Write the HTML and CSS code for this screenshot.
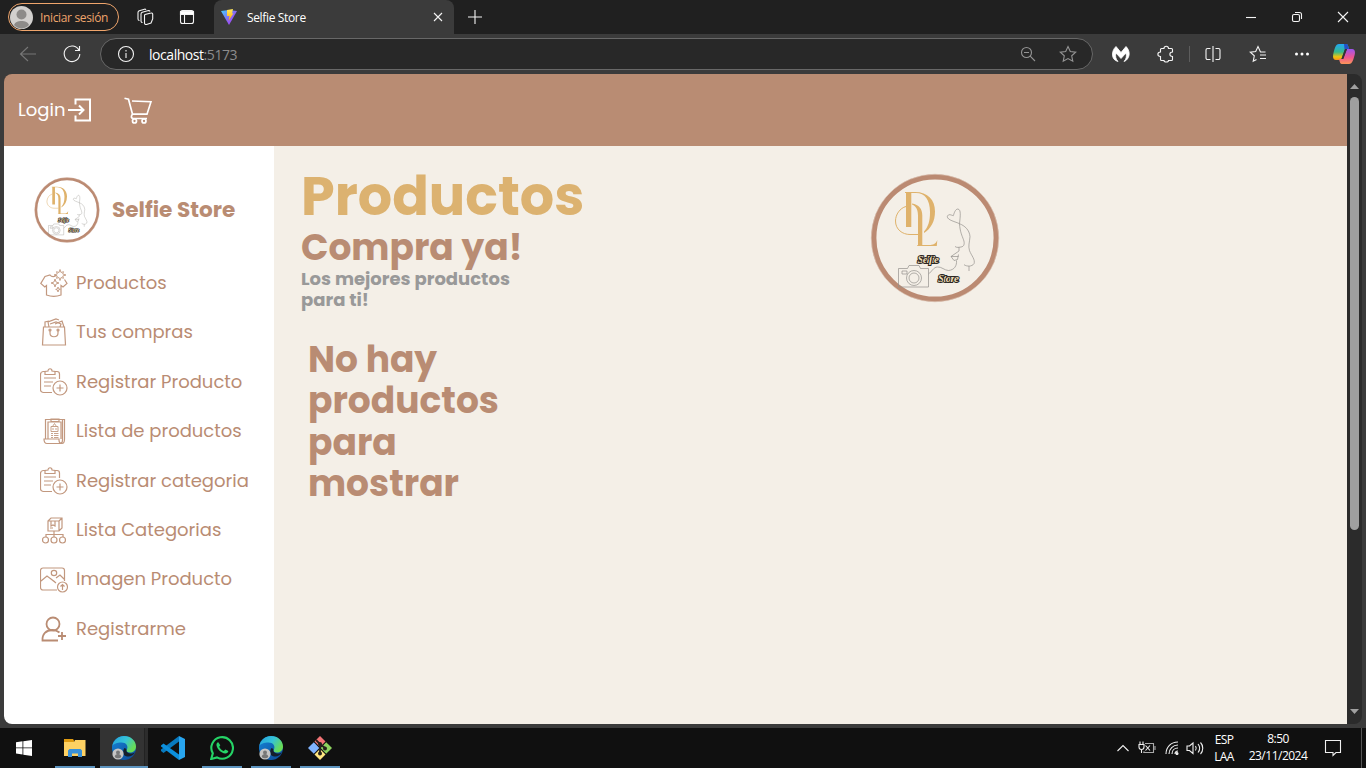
FILE: index.html
```html
<!DOCTYPE html>
<html lang="es">
<head>
<meta charset="utf-8">
<title>Selfie Store</title>
<link rel="stylesheet" href="styles.css">
</head>
<body>
<svg class="defs" aria-hidden="true">
  <defs>
    <linearGradient id="viteA" x1="0" y1="0" x2="1" y2="1"><stop offset="0" stop-color="#41d1ff"/><stop offset=".55" stop-color="#8a63f5"/><stop offset="1" stop-color="#bd34fe"/></linearGradient>
    <linearGradient id="viteB" x1="0" y1="0" x2="0" y2="1"><stop offset="0" stop-color="#ffea5f"/><stop offset="1" stop-color="#ffa800"/></linearGradient>
    <linearGradient id="edgeA" x1="0" y1="0" x2="1" y2=".5"><stop offset="0" stop-color="#249fdc"/><stop offset=".55" stop-color="#35c3d8"/><stop offset="1" stop-color="#68dc55"/></linearGradient>
    <linearGradient id="edgeB" x1="0" y1="0" x2="1" y2="1"><stop offset="0" stop-color="#1685d8"/><stop offset="1" stop-color="#0c4896"/></linearGradient>
    <linearGradient id="copA" x1="0" y1="0" x2="0" y2="1"><stop offset="0" stop-color="#22a7f5"/><stop offset=".5" stop-color="#36b98b"/><stop offset=".8" stop-color="#f1c40f"/><stop offset="1" stop-color="#f39019"/></linearGradient>
    <linearGradient id="copB" x1="0" y1="0" x2="0" y2="1"><stop offset="0" stop-color="#9c55f0"/><stop offset=".55" stop-color="#ee5592"/><stop offset="1" stop-color="#fb9657"/></linearGradient>
  </defs>
  <symbol id="logo" viewBox="0 0 130 130">
    <circle cx="65" cy="65" r="61.2" fill="none" stroke="#bb8a72" stroke-width="5.2"/>
    <circle cx="65" cy="65" r="63.8" fill="none" stroke="#dcc4b6" stroke-width=".6"/>
    <path d="M35 19h10c13 0 20 8 20 19.500 0 10-4 17-11 21.500v-1.500c4-4.500 6-10 6-19.500 0-12-5-19-14-19h-4.700v34H36V20h-1z" fill="#dfb26b"/>
    <path d="M42 30.500c7 1 10.300 5.500 10.300 12V72H59c4 0 7-1 8.300-5l-.5 6H47v-.8h1V43c0-6-1.500-9.500-6-11.500z" fill="#dfb26b"/>
    <path d="M36 33.500c-6 1.500-10.500 8-10.500 14.500 0 8.500 7 13.500 14.500 13.500h8" fill="none" stroke="#dfb26b" stroke-width="1"/>
    <g fill="none" stroke="#94918c" stroke-width=".7" stroke-linejoin="round">
      <path d="M89.500 50.700c-4-2-12-3.500-12.200-7 1-3.500 4-1.500 6-1 1-3 2-6.500 4.500-6.700 3.500.5 2.500 7 1.700 14.700.5 8 2.500 12 4 16 1.500 4 .5 7-2.500 7.300-2 .2-4 1-6-.5M89.500 50.700c5 2 10 6 10.500 13-.5 6-2 9-.5 14 2 5 6 9 4.500 13-2 3-7 3-10 1M99 93v5M89 74v4l-8 5.500h7.500M81 83.500l3 4 3.500-1 1-5M86.500 87.500c.5 5-2 9.500-8 10-4 0-7-4-11-3.500-4 0-6 5-9 7"/>
      <path d="M28.500 95.500h9l1.500-3h10l1.500 3h8v18.500h-30zM32 98h5v3h-5z"/>
      <circle cx="44" cy="105" r="7.500"/><circle cx="44" cy="105" r="5"/>
    </g>
    <g class="logo-word"><text x="47.500" y="89.500" textLength="21.500">Selfie</text><text x="68" y="108.500" textLength="21">Store</text></g>
  </symbol>
  <symbol id="clip" viewBox="0 0 28 28">
    <path d="M12 24.500H3.500a3 3 0 0 1-3-3V6.500a3 3 0 0 1 3-3H6M14 3.500h3a2.500 2.500 0 0 1 2.500 2.500v5M5 6.500V3.500l3-.5c0-3 4-3 4 0l3 .5v3zM4 10h12M4 14h9M4 18h7"/><circle cx="20" cy="20" r="7"/><path d="M20 16.500v7M16.500 20h7"/>
  </symbol>
  <symbol id="edge" viewBox="0 0 24 24">
    <circle cx="12" cy="12" r="12" fill="url(#edgeB)"/>
    <path d="M.3 10C1.500 4 6.500 0 12 0c7 0 12 5 12 10.500 0 4-3 6-6 6-2.500 0-4-1-3.500-2.200C17 10 14 6.500 9.500 6.500 5 6.500 1.500 8 .3 10z" fill="url(#edgeA)"/>
    <path d="M14.500 14c-.5 2 2 3.500 4.500 3.500 1.500 0 3-.4 4-1.200C21 20 18 21 15 20.500c-4-.6-5-5-2.500-8.500 1 .3 2 1 2 2z" fill="#151f2c"/>
    <circle cx="6" cy="18" r="5.600" fill="#c6c5c4"/><circle cx="6" cy="16.400" r="2" fill="#777"/><path d="M2.700 21c0-4 6.600-4 6.600 0-1.500 1.800-5 1.800-6.600 0z" fill="#777"/>
  </symbol>
</svg>

<div class="browser">
  <header class="tabstrip">
    <div class="profile">
      <svg class="avatar" viewBox="0 0 23 23"><circle cx="11.500" cy="11.500" r="11.500" fill="#d2d0ce"/><circle cx="11.500" cy="8.500" r="5" fill="#8d8b89"/><path d="M4 19c1.500-5.500 13.500-5.500 15 0-4 4.500-11 4.500-15 0z" fill="#8d8b89"/></svg>
      <span class="profile-name">Iniciar sesión</span>
    </div>
    <svg class="ico workspaces" viewBox="0 0 20 20"><path d="M10 7.500l6-1.500a1.300 1.300 0 0 1 1.700 1.300V12l-1.700 4-4.500 1.400a1.500 1.500 0 0 1-2-1.400V9a1.700 1.700 0 0 1 .5-1.500zM7.500 15.500a1.500 1.500 0 0 1-1.500-1.500V7a2 2 0 0 1 1.300-1.800l6.200-1.700a1.500 1.500 0 0 1 1.500 1M4.500 13.500A1.500 1.500 0 0 1 3 12V5.500a2 2 0 0 1 1.300-1.800l5.200-1.500a1.500 1.500 0 0 1 1.500.6" /></svg>
    <svg class="ico actions" viewBox="0 0 20 20"><rect x="3.500" y="3.500" width="13" height="13" rx="2"/><path d="M3.500 4.500h13v3h-13z" fill="#fff"/><path d="M7.500 8v8"/></svg>
    <div class="tab">
      <svg class="favicon" viewBox="0 0 16 16"><path d="M0 2l7.500-1L16 2 8 16z" fill="url(#viteA)"/><path d="M6 1l6-1-1 4.500 1.500-.3L7.500 12l1-5H6z" fill="url(#viteB)"/></svg>
      <span class="tab-title">Selfie Store</span>
      <svg class="ico tab-close" viewBox="0 0 20 20"><path d="M6 6l8 8M14 6l-8 8"/></svg>
    </div>
    <svg class="ico newtab" viewBox="0 0 20 20"><path d="M3 10h14M10 3v14"/></svg>
    <div class="winctl">
      <svg class="ico" viewBox="0 0 20 20"><path d="M5 10.500h10"/></svg>
      <svg class="ico" viewBox="0 0 20 20"><rect x="5.500" y="7.500" width="7" height="7" rx="1.500"/><path d="M8 5.500h4.500a2 2 0 0 1 2 2V12"/></svg>
      <svg class="ico" viewBox="0 0 20 20"><path d="M5 5l10 10M15 5L5 15"/></svg>
    </div>
  </header>

  <div class="toolbar">
    <svg class="ico back" viewBox="0 0 20 20"><path d="M18 10H2.500M10 3l-7.500 7 7.500 7"/></svg>
    <svg class="ico reload" viewBox="0 0 20 20"><path d="M17 6.300A7.800 7.800 0 1 0 17.800 10M17.500 2v4.500H13"/></svg>
    <div class="address">
      <svg class="ico" viewBox="0 0 20 20"><circle cx="10" cy="10" r="7.500"/><path d="M10 9v5M10 6v1.500"/></svg>
      <span class="url">localhost<span class="port">:5173</span></span>
      <svg class="ico dim zoomout" viewBox="0 0 20 20"><circle cx="8.500" cy="8.500" r="5"/><path d="M12.200 12.200L17 17M6 8.500h5"/></svg>
      <svg class="ico dim star" viewBox="0 0 20 20"><path d="M10 2.500l2.300 5 5.400.6-4 3.700 1.100 5.500-4.800-2.700-4.800 2.700 1.100-5.500-4-3.700 5.400-.6z"/></svg>
    </div>
    <svg class="ico mb" viewBox="0 0 20 20"><path d="M5 2.500L10 8.500l5-6c4 4 4.500 10 0 14l-2 1c2-2 3-5 2-8.500L10 14.500 5 9c-1 3.500 0 6.500 2 8.500C0 16 0 7 5 2.500z" fill="#fff" stroke="#fff" stroke-width=".8"/></svg>
    <svg class="ico ext" viewBox="0 0 20 20"><path d="M6.500 4.500H9c0-3 4.500-3 4.500 0h3a1 1 0 0 1 1 1V8c-3.500 0-3.500 4.500 0 4.500v3a1 1 0 0 1-1 1h-3c0 2-4.500 2-4.500 0H6.500a1 1 0 0 1-1-1v-3c-3.500 0-3.500-4.500 0-4.500V5.500a1 1 0 0 1 1-1z"/></svg>
    <span class="sep"></span>
    <svg class="ico split" viewBox="0 0 20 20"><path d="M7.500 4.500H4.500a1.500 1.500 0 0 0-1.500 1.500v8a1.500 1.500 0 0 0 1.500 1.500H7.500M12.500 4.500h3a1.500 1.500 0 0 1 1.500 1.500v8a1.500 1.500 0 0 1-1.500 1.500h-3M10 2v16"/></svg>
    <svg class="ico favs" viewBox="0 0 20 20"><path d="M17.500 8h-5L10 2.500l-2.300 5-5.400.6 4 3.700-1.100 5.500 3.300-1.800M12 11h6M12 14.500h6"/></svg>
    <svg class="ico dots" viewBox="0 0 20 20"><g fill="#fff" stroke="none"><circle cx="4.500" cy="10" r="1.500"/><circle cx="10" cy="10" r="1.500"/><circle cx="15.500" cy="10" r="1.500"/></g></svg>
    <svg class="copilot" viewBox="0 0 22 20"><path d="M6 0h7c2 0 2 1.500 3 5h-4L8 16H3c-3 0-3.500-3-2.500-7C1.500 5 2.500 0 6 0z" fill="url(#copA)"/><path d="M11 0h2c2 0 2.300 2 3 5h-4.500z" fill="#2350c6"/><path d="M16 20H9c-2 0-2-1.500-3-5h4L14 5h5c3 0 3.500 3 2.500 6.500C20.500 15 19.500 20 16 20z" fill="url(#copB)"/><path d="M12 5L8.500 15h1.800L14 5z" fill="#333"/></svg>
  </div>

  <div class="viewport">
    <div class="page">
      <nav class="navbar">
        <span class="login">Login</span>
        <svg class="login-icon" viewBox="0 0 24 24"><path d="M7.500 6.500V1.500h14.500v21H7.500v-5M0 12h15M11 7.500l4.500 4.500-4.500 4.500"/></svg>
        <svg class="cart-icon" viewBox="0 0 28 27"><path d="M.5 1.200l4 1 4 15H23l4-12.500L8 4M8.500 17c-2 3-1 4.500 1 4.500H23"/><circle cx="10.500" cy="24" r="2"/><circle cx="20" cy="24" r="2"/></svg>
      </nav>
      <div class="body">
        <aside class="sidebar">
          <div class="brand"><svg class="brand-logo"><use href="#logo"/></svg><h2 class="brand-name">Selfie Store</h2></div>
          <ul class="menu">
            <li><svg viewBox="0 0 28 28"><path d="M16.500 6c-2 2.500-5 2-6.500 0L5 7.500.8 14.500l4 3.500L6.500 16.500V26c4 1.500 10.500 1.500 14.500 0v-9.500l2 1.500 4-3.500-2.500-4"/><path class="thin" d="M20 .5l1 3 2.500-.8-.8 2.300 3.300 1-3.300 1 .8 2.300-2.500-.8-1 3-1-3-2.500.8.8-2.300-3.300-1 3.300-1-.8-2.300 2.500.8zM15 10l1 3 3 1-3 1-1 3-1-3-3-1 3-1zM18 18l.6 1.700 1.700.6-1.700.6L18 23l-.6-2-1.700-.6 1.700-.6z"/></svg><span>Productos</span></li>
            <li><svg viewBox="0 0 28 28"><path d="M3.500 9h21l1 18h-23zM5 9V4l4-1M9 9l-1-5 8-3 3 1M10 6l6-2 5 2-1 3M15 6l7-3 2 6M10 12v3c0 5 8 5 8 0v-3"/><circle cx="10" cy="12" r="1"/><circle cx="18" cy="12" r="1"/></svg><span>Tus compras</span></li>
            <li><svg><use href="#clip"/></svg><span>Registrar Producto</span></li>
            <li><svg viewBox="0 0 28 28"><path d="M5.500 22V2.500h19V22M22.500 3v20c0 4-3.500 4-3.500 0v-1H4c0 3.500 1 4.500 3 4.500h15c2 0 2.500-1 2.500-4.500M8 22V5h13v17M11 4.500V2h8v2.500z"/><path class="thin" d="M11 9.500h7v5h-7zM12.500 9.500l2-3 2 3M13 11v2M16 11v2M11 16.500h2M14 16.500h4.500M11 18.500h2M14 18.500h4.500M11 20.500h2M14 20.500h4.500"/></svg><span>Lista de productos</span></li>
            <li><svg><use href="#clip"/></svg><span>Registrar categoria</span></li>
            <li><svg viewBox="0 0 28 28"><path d="M8 5l3-3h11v10l-3 3H8zM8 5h11v10M19 5l3-3M11 5v5l2-1 2 1V5M10 12h3M14 15v6M6 21v-2.500h17V21"/><circle cx="5.500" cy="24" r="3"/><circle cx="14" cy="24" r="3"/><circle cx="22.500" cy="24" r="3"/></svg><span>Lista Categorias</span></li>
            <li><svg viewBox="0 0 28 28"><path d="M17 25H3a2.500 2.500 0 0 1-2.500-2.500v-17A2.500 2.500 0 0 1 3 3h19a2.500 2.500 0 0 1 2.500 2.500V16M1 16l6-5 8 6M11 14l5 4M16 13l4-3 4 4"/><circle cx="14" cy="8" r="2.700"/><circle cx="22.500" cy="22" r="5"/><path d="M22.500 25v-5.500M20.500 21.500l2-2 2 2"/></svg><span>Imagen Producto</span></li>
            <li><svg class="bold" viewBox="0 0 28 28"><circle cx="13" cy="9" r="6.500"/><path d="M18 25.500H2.500C2 19 6 15 12.500 15c3 0 5 1 7 2.500M22 17v8M18 21h8"/></svg><span>Registrarme</span></li>
          </ul>
        </aside>
        <main class="content">
          <section class="intro">
            <h1 class="title">Productos</h1>
            <h2 class="subtitle">Compra ya!</h2>
            <p class="lead">Los mejores productos<br>para ti!</p>
            <h2 class="empty">No hay<br>productos<br>para<br>mostrar</h2>
          </section>
          <svg class="hero-logo"><use href="#logo"/></svg>
        </main>
      </div>
    </div>
    <div class="scrollbar">
      <svg viewBox="0 0 9 5"><path d="M0 5L4.500 0 9 5z"/></svg>
      <div class="thumb"></div>
      <svg viewBox="0 0 9 5"><path d="M0 0l4.500 5L9 0z"/></svg>
    </div>
  </div>
</div>

<footer class="taskbar">
  <div class="task start"><svg class="s16" viewBox="0 0 16 16"><path d="M0 2.300L6.500 1.300v6.200H0zM7.300 1.200L16 0v7.500H7.300zM0 8.300h6.500v6.200L0 13.600zM7.300 8.300H16V16l-8.700-1.200z" fill="#fff"/></svg></div>
  <div class="task open"><svg class="folder" viewBox="0 0 22 18"><path d="M0 0h9l1 1.500V5H0z" fill="#e09b11"/><path d="M0 3h10l1-2h10.500v16H0z" fill="#fed163"/><path d="M4 18v-6.500L5.500 10h11l1.500 1.500V18h-4v-3.500H8V18z" fill="#3a91d8"/></svg></div>
  <div class="task active"><svg class="s24"><use href="#edge"/></svg></div>
  <div class="task"><svg class="s24" viewBox="0 0 24 24"><path d="M18 0v5.500L2.500 17 0 15v-1.500z" fill="#087abf"/><path d="M0 9.500v1L18 24v-5.500L2.500 7.500z" fill="#0c8fdc"/><path d="M18 0l6 3v18l-6 3z" fill="#28a5ef"/></svg></div>
  <div class="task open"><svg class="s24" viewBox="0 0 24 24"><path d="M1.200 23l1.600-5.700A10.800 10.800 0 1 1 7 21.400z" fill="none" stroke="#25d366" stroke-width="2.100"/><path d="M8.300 6.200c-1.300.2-2 1.500-1.800 3 .8 4 4.500 7.600 8.700 8.300 1.700.1 3-.9 3.100-2.500l-3-1.600-1.400 1.600c-2-.6-3.800-2.200-4.700-4.300l1.100-1.400z" fill="#25d366"/></svg></div>
  <div class="task open"><svg class="s24"><use href="#edge"/></svg></div>
  <div class="task open"><svg class="s24" viewBox="0 0 24 24"><path d="M12 0l5.500 5.500L12 11 6.500 5.500z" fill="#f37476"/><path d="M5.800 6.200l5.500 5.800-5.500 5.800L0 12z" fill="#80b3ff"/><path d="M18.200 6.200L24 12l-5.800 5.800-5.500-5.800z" fill="#8dd35f"/><path d="M12 13l5.500 5.500L12 24l-5.500-5.500z" fill="#ffe680"/><path d="M8 4l4 4v10M12 8l5 4" stroke="#241f1c" stroke-width="1.800" fill="none"/><g fill="#241f1c"><circle cx="12" cy="8" r="2"/><circle cx="17" cy="12.500" r="2"/><circle cx="12" cy="17.500" r="2"/></g></svg></div>
  <div class="tray">
    <svg class="t-chev" viewBox="0 0 14 14"><path d="M1.500 10L7 4.500l5.500 5.500"/></svg>
    <svg class="t-bat" viewBox="0 0 18 14"><path d="M2 .5v3M5 .5v3M1 3.500h5V6a2.500 2.500 0 0 1-5 0zM3.500 8.500V12M6 10.500v1h9"/><path d="M7 2.500h8.500v9H6M17 5v4" stroke="#aaa"/><path d="M7.500 4.500l4.500 5M12 4.500l-4.500 5"/></svg>
    <svg class="t-wifi" viewBox="0 0 14 14"><path d="M1 13C1 6 6 1 13 1M4 13c0-5 4-9 9-9M7 13c0-3.500 2.500-6 6-6M10 13c0-2 1-3 3-3"/><circle cx="12" cy="12.500" r="1" fill="#fff"/></svg>
    <svg class="t-vol" viewBox="0 0 18 14"><path d="M1 5h2.500L7 2v10.500L3.500 9.500H1zM9.500 5c1 1.500 1 3 0 4.500M12 3c2 2.500 2 6 0 8.500M14.500 1.500c3 3 3 8.500 0 11.500"/></svg>
    <div class="lang">ESP<br>LAA</div>
    <div class="clock">8:50<br>23/11/2024</div>
    <svg class="t-note" viewBox="0 0 18 18"><path d="M1.500 1.500h15v12H12L9 16.500V13.500H1.500z"/></svg>
    <span class="desk"></span>
  </div>
</footer>
</body>
</html>
```

FILE: styles.css
```css
* { box-sizing: border-box; }
body { margin: 0; width: 1366px; height: 768px; overflow: hidden; background: #3b3b3b; font-family: "Open Sans", "Noto Sans", sans-serif; display: flex; flex-direction: column; }
svg { display: block; flex: none; }
.defs { position: absolute; width: 0; height: 0; }
.browser { height: 728px; display: flex; flex-direction: column; }
.ico { width: 20px; height: 20px; fill: none; stroke: #f4f4f4; stroke-width: 1.1; }

.tabstrip { height: 34px; flex: none; background: #202020; display: flex; align-items: center; }
.profile { width: 111px; height: 28px; margin-left: 8px; border: 1px solid #efa56c; border-radius: 14px; display: flex; align-items: center; padding-left: 1px; gap: 7px; color: #efa56c; font-size: 12px; white-space: nowrap; }
.avatar { width: 23px; height: 23px; }
.profile-name { letter-spacing: -.35px; }
.workspaces { margin-left: 16px; }
.actions { margin-left: 22px; }
.tab { width: 240px; height: 34px; margin-left: 17px; background: #3b3b3b; border-radius: 8px 8px 0 0; display: flex; align-items: center; padding-left: 7px; }
.favicon { width: 16px; height: 16px; }
.tab-title { margin-left: 10px; color: #fff; font-size: 12px; letter-spacing: -.35px; flex: 1; }
.tab-close { margin-right: 6px; }
.newtab { margin-left: 11px; }
.winctl { margin-left: auto; display: flex; gap: 26px; margin-right: 13px; }

.toolbar { height: 40px; flex: none; display: flex; align-items: center; }
.back { margin-left: 18px; stroke: #777; }
.reload { margin-left: 24px; }
.address { width: 993px; height: 32px; margin-left: 18px; border: 1px solid #686868; border-radius: 16px; background: #282828; display: flex; align-items: center; padding-left: 15px; }
.url { margin-left: 13px; flex: 1; color: #fff; font-size: 14px; letter-spacing: -.45px; }
.port { color: #8c8c8c; }
.dim { stroke: #949494; }
.zoomout { margin-right: 20px; }
.star { margin-right: 14px; }
.mb { margin-left: 18px; }
.ext { margin-left: 24px; }
.sep { width: 1px; height: 16px; margin-left: 14px; background: #5d5d5d; }
.split { margin-left: 13px; }
.favs { margin-left: 25px; }
.dots { margin-left: 24px; }
.copilot { width: 22px; height: 20px; margin-left: 21px; }

.viewport { width: 1358px; height: 650px; margin-left: 4px; border-radius: 8px; overflow: hidden; display: flex; background: #2b2b2b; }
.page { width: 1343px; display: flex; flex-direction: column; font-family: Poppins, Inter, sans-serif; }
.navbar { height: 72px; flex: none; background: #b98c73; display: flex; align-items: center; padding-left: 14px; }
.login { color: #fff; font-size: 18px; width: 49px; margin-bottom: 2px; }
.login-icon { width: 24px; height: 24px; margin-left: 1px; fill: none; stroke: #fff; stroke-width: 2; }
.cart-icon { width: 28px; height: 27px; margin-left: 32px; fill: none; stroke: #fff; stroke-width: 1.7; }
.body { flex: 1; display: flex; }
.sidebar { width: 270px; background: #fff; color: #b98c73; }
.brand { display: flex; align-items: center; padding: 31px 0 0 30px; gap: 12px; }
.brand-logo { width: 66px; height: 66px; }
.brand-name { margin: 0 0 1px; font-size: 21.600px; line-height: 30px; font-weight: 700; white-space: nowrap; }
.menu { list-style: none; margin: 15.600px 0 0; padding: 0 0 0 36px; }
.menu li { height: 49.450px; display: flex; align-items: center; gap: 8px; font-size: 18px; white-space: nowrap; }
.menu li span { margin-bottom: 2px; }
.menu svg { width: 28px; height: 28px; margin-top: -1px; fill: none; stroke: #c2987f; stroke-width: 1.2; }
.menu svg .thin { stroke-width: .9; }
.menu svg.bold { stroke: #b98c73; stroke-width: 1.8; }
.content { flex: 1; background: #f4efe7; display: flex; align-items: flex-start; }
.intro { width: 592px; padding: 18px 0 0 27px; }
.title, .subtitle, .lead, .empty { margin: 0; font-weight: 700; white-space: nowrap; }
.title { color: #dcb270; font-size: 54px; line-height: 65px; }
.subtitle { color: #b98c73; font-size: 36px; line-height: 38px; }
.lead { color: #999; font-size: 18px; line-height: 21px; margin-top: 1px; }
.empty { color: #b98c73; font-size: 36px; line-height: 41.300px; margin: 29px 0 0 7px; }
.hero-logo { width: 130px; height: 130px; margin-top: 27px; margin-left: 4px; }
.logo-word { font: italic 700 11px "Liberation Serif", serif; fill: #f0dfba; stroke: #2b2723; stroke-width: 2px; paint-order: stroke; }

.scrollbar { width: 15px; display: flex; flex-direction: column; align-items: center; padding: 10px 0 10px; }
.scrollbar svg { width: 9px; height: 5px; fill: #a0a0a0; }
.thumb { width: 9px; height: 433px; margin: 8px 0 auto; border-radius: 5px; background: #9f9f9f; }

.taskbar { height: 40px; background: #101010; display: flex; }
.task { width: 48px; height: 40px; margin-right: 1px; display: flex; align-items: center; justify-content: center; position: relative; }
.start { margin-right: 3px; }
.open::after { content: ""; position: absolute; left: 4px; right: 4px; bottom: 0; height: 2px; background: #5d94bf; }
.active { background: linear-gradient(90deg, #333 44px, #222 44px, #222 45px, #2c2c2c 45px); border-bottom: 2px solid #5d94bf; padding-top: 2px; }
.s16 { width: 16px; height: 16px; }
.s24 { width: 24px; height: 24px; }
.folder { width: 22px; height: 18px; }
.tray { margin-left: auto; display: flex; align-items: center; color: #fff; font-size: 12px; line-height: 17px; text-align: center; }
.tray svg { fill: none; stroke: #f0f0f0; stroke-width: 1.1; }
.t-chev { width: 14px; height: 14px; }
.t-bat { width: 18px; height: 14px; margin-left: 8px; }
.t-wifi { width: 14px; height: 14px; margin-left: 9px; }
.t-vol { width: 18px; height: 14px; margin-left: 7px; }
.lang { width: 24px; margin-left: 8px; letter-spacing: -.6px; }
.clock { width: 62px; margin-left: 11px; letter-spacing: -.5px; position: relative; top: -1px; }
.t-note { width: 18px; height: 18px; margin-left: 15px; }
.desk { width: 1px; height: 40px; margin: 0 4px 0 19px; background: #555; }
```
